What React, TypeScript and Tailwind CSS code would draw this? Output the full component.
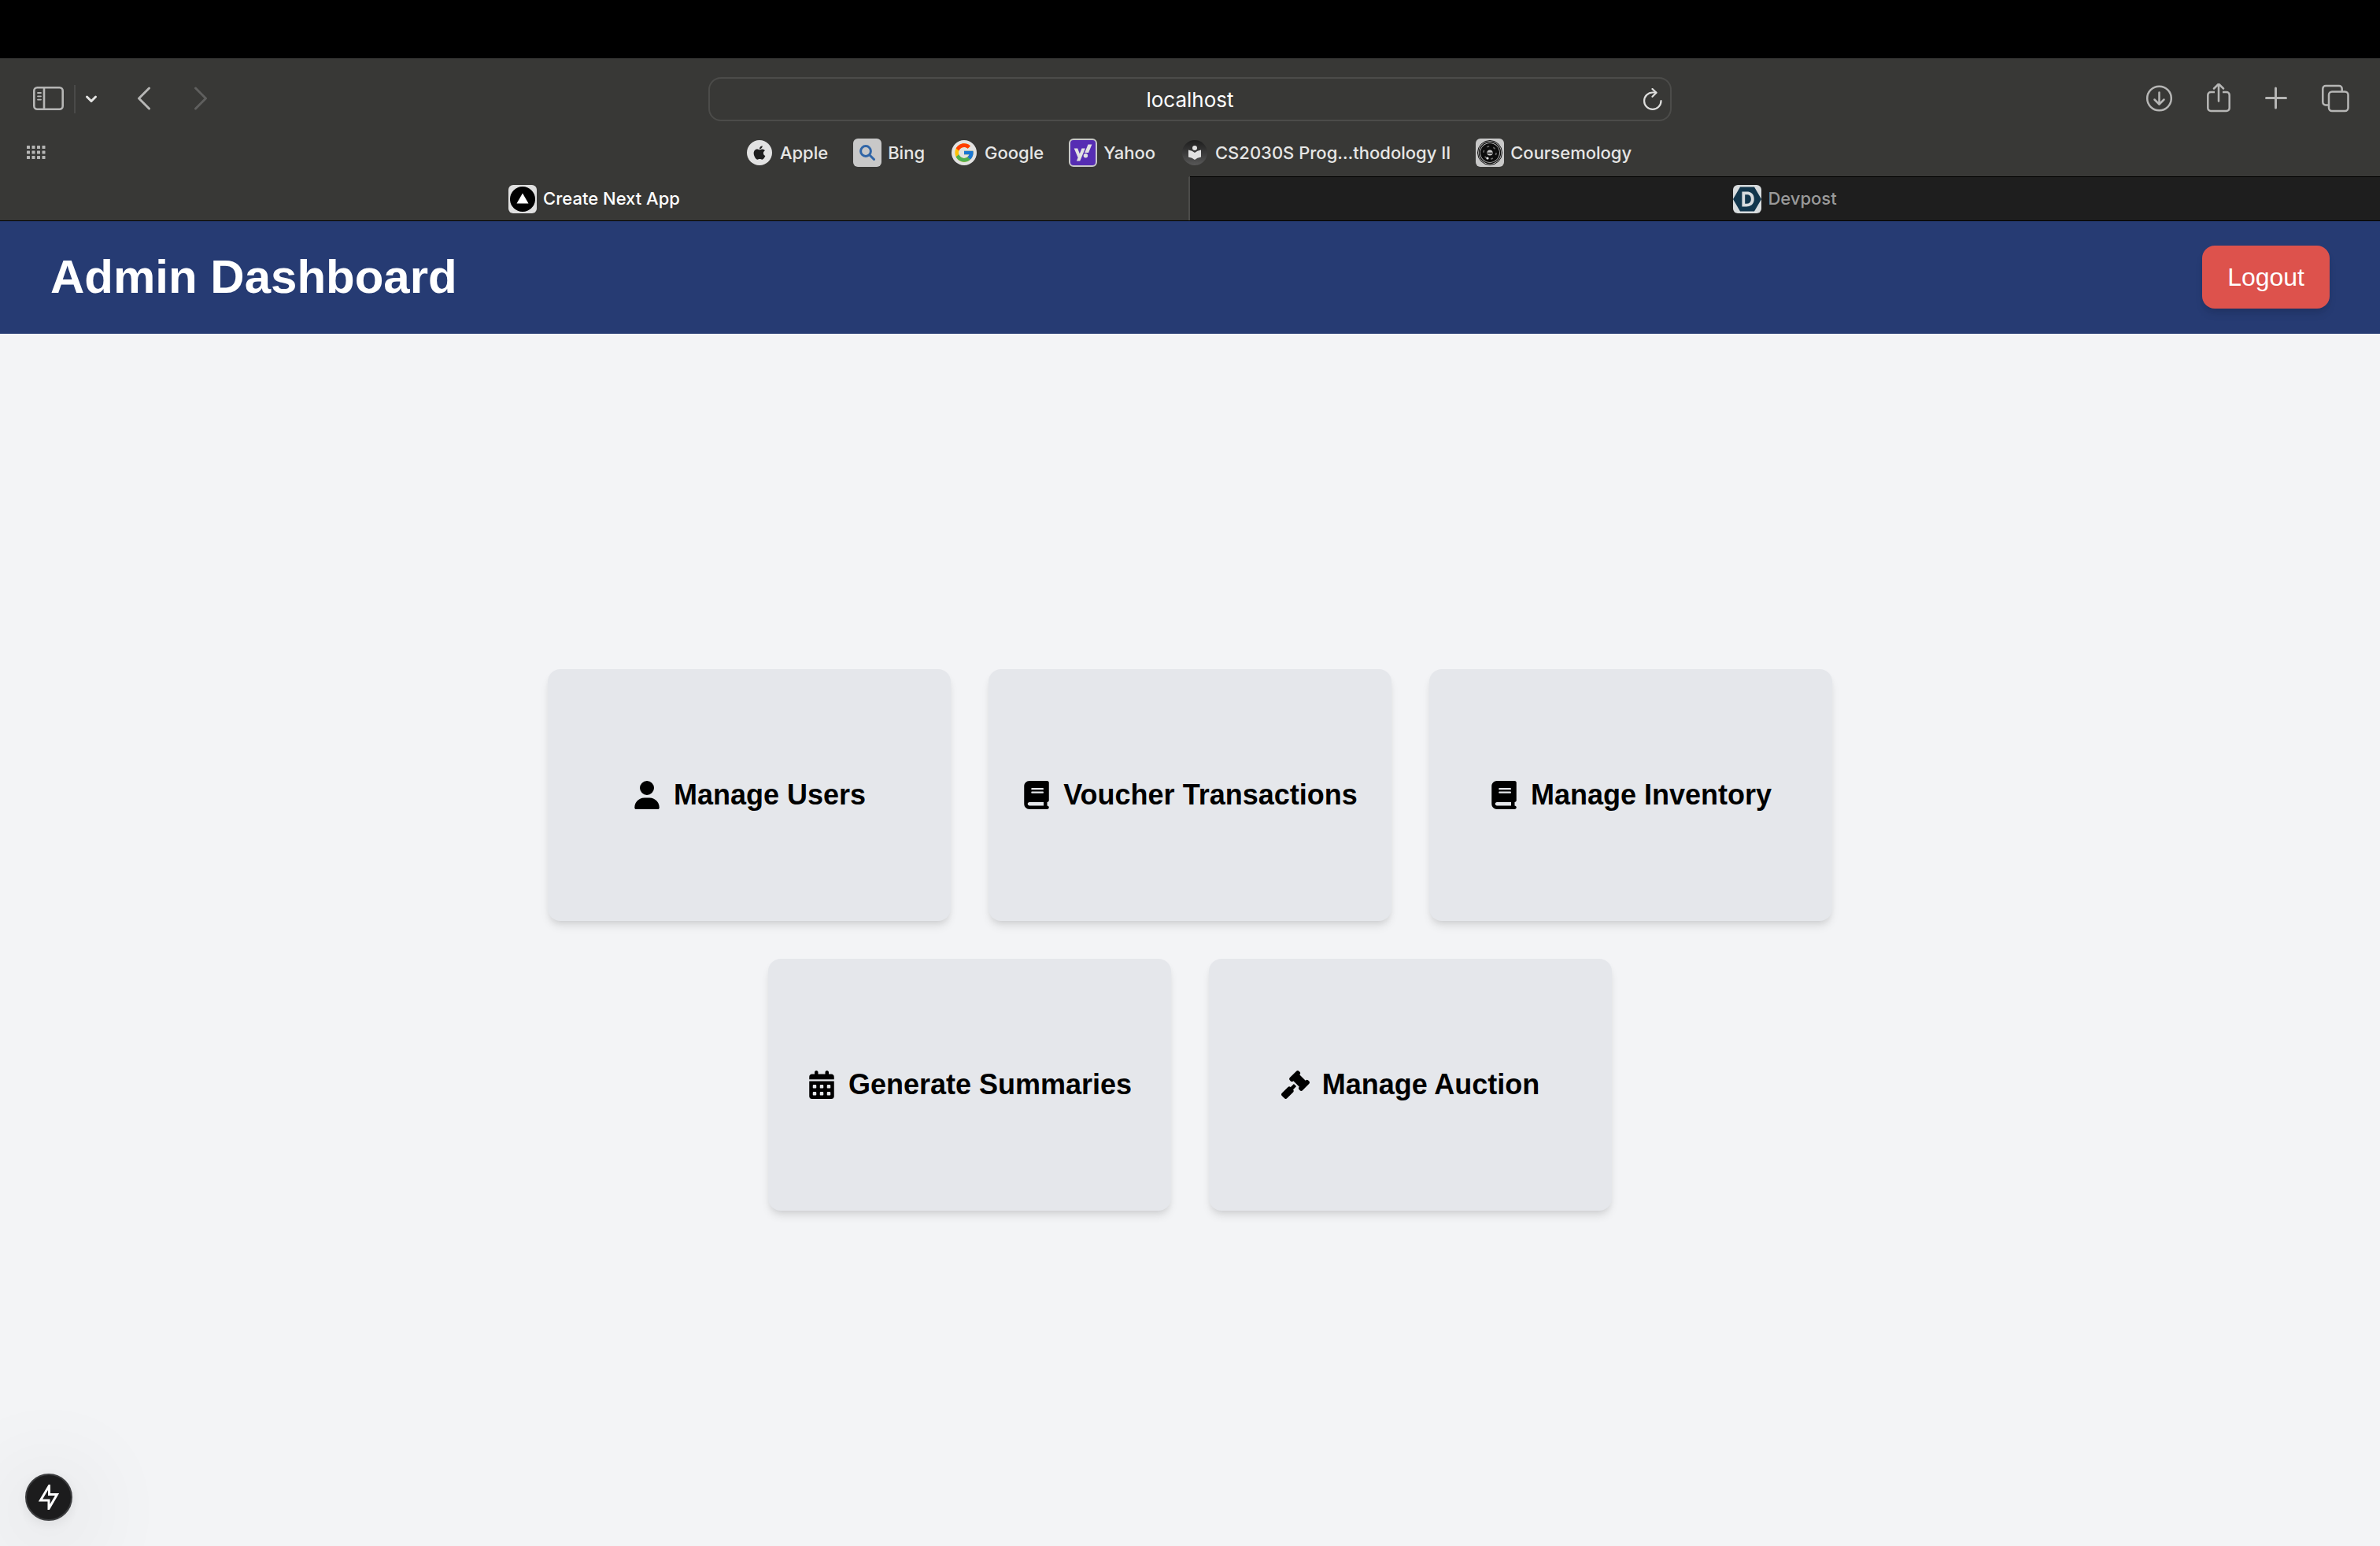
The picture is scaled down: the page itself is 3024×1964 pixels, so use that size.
import { ReactNode } from "react";
import {
  FaApple,
  FaBook,
  FaCalendarDays,
  FaGavel,
  FaUser,
  FaYahoo,
} from "react-icons/fa6";
import { FcGoogle } from "react-icons/fc";
import { SiDevpost } from "react-icons/si";

interface Bookmark {
  name: string;
  icon: ReactNode;
}

const bookmarks: Bookmark[] = [
  {
    name: "Apple",
    icon: (
      <span className="w-8 h-8 rounded-full bg-[#e2e2e2] flex items-center justify-center">
        <FaApple className="w-5 h-5 text-[#1e1e1e]" />
      </span>
    ),
  },
  {
    name: "Bing",
    icon: (
      <span className="w-9 h-9 rounded-md bg-[#c8c8c8] flex items-center justify-center">
        <svg
          className="w-5 h-5"
          viewBox="0 0 20 20"
          fill="none"
          stroke="#2f65a7"
          strokeWidth={3}
          strokeLinecap="round"
        >
          <circle cx="8" cy="8" r="6.4" />
          <path d="M13 13l5.5 5.5" />
        </svg>
      </span>
    ),
  },
  {
    name: "Google",
    icon: (
      <span className="w-8 h-8 rounded-full bg-[#e2e2e2] flex items-center justify-center">
        <FcGoogle className="w-7 h-7" />
      </span>
    ),
  },
  {
    name: "Yahoo",
    icon: (
      <span className="w-9 h-9 rounded-md border-2 border-[#c8c8c8] bg-[#562db3] flex items-center justify-center">
        <FaYahoo className="w-6 h-6 text-[#e2e2e2]" />
      </span>
    ),
  },
  {
    name: "CS2030S Prog…thodology II",
    icon: (
      <span className="w-8 h-8 rounded-full bg-gradient-to-b from-[#1e1e1e] to-[#585858] flex items-center justify-center">
        <svg className="w-5 h-5" viewBox="0 0 20 20" fill="#e2e2e2">
          <circle cx="10" cy="4" r="3" />
          <path d="M2 6.5Q7 7 10 10Q13 7 18 6.5V15.5Q13 16 10 19Q7 16 2 15.5Z" />
        </svg>
      </span>
    ),
  },
  {
    name: "Coursemology",
    icon: (
      <svg className="w-9 h-9" viewBox="0 0 36 36" fill="none">
        <rect width="36" height="36" rx="6" fill="#c8c8c8" />
        <circle cx="18" cy="18" r="15.5" stroke="#111" />
        <circle cx="18" cy="18" r="13.5" stroke="#111" strokeWidth={1.4} />
        <circle cx="18" cy="18" r="12" fill="#0c0c0c" />
        <circle
          cx="18"
          cy="18"
          r="8"
          stroke="#6a6a6a"
          strokeWidth={1.6}
          strokeDasharray="3 5.4"
        />
        <circle cx="18" cy="18" r="3.6" fill="#c8c8c8" />
        <path d="M15 18.5h6" stroke="#111" strokeWidth={1.5} />
        <circle cx="15" cy="25" r="1.6" fill="#e8e8e8" />
      </svg>
    ),
  },
];

const cardRows = [
  [
    { label: "Manage Users", Icon: FaUser },
    { label: "Voucher Transactions", Icon: FaBook },
    { label: "Manage Inventory", Icon: FaBook },
  ],
  [
    { label: "Generate Summaries", Icon: FaCalendarDays },
    { label: "Manage Auction", Icon: FaGavel },
  ],
];

function Toolbar() {
  return (
    <div className="grid grid-cols-[1fr_minmax(0,1224px)_1fr] items-center">
      <div className="flex items-center pl-[42px] text-[#b6b6b5]">
        <button type="button" aria-label="Toggle sidebar">
          <svg
            className="w-10 h-8"
            viewBox="0 0 40 32"
            fill="none"
            stroke="currentColor"
            strokeWidth={2.6}
            strokeLinecap="round"
          >
            <rect x="1.3" y="1.3" width="36.4" height="27.4" rx="4" />
            <path d="M14 1.3v27.4" />
            <path d="M6 8h4M6 12.3h4M6 16.6h4" strokeWidth={1.8} />
          </svg>
        </button>
        <div className="ml-3 w-0.5 h-9 bg-[#4a4a49]"></div>
        <button
          type="button"
          aria-label="Tab groups"
          className="ml-3 text-[#e4e4e3]"
        >
          <svg
            className="w-4 h-4"
            viewBox="0 0 16 16"
            fill="none"
            stroke="currentColor"
            strokeWidth={3}
            strokeLinecap="round"
            strokeLinejoin="round"
          >
            <path d="M2.5 5l5.5 5.5L13.5 5" />
          </svg>
        </button>
        <button type="button" aria-label="Back" className="ml-[50px]">
          <svg
            className="w-[18px] h-8"
            viewBox="0 0 18 32"
            fill="none"
            stroke="currentColor"
            strokeWidth={3}
            strokeLinecap="round"
            strokeLinejoin="round"
          >
            <path d="M15.5 2L2.5 15l13 13" />
          </svg>
        </button>
        <button
          type="button"
          aria-label="Forward"
          className="ml-[54px] text-[#5f5f5e]"
        >
          <svg
            className="w-[18px] h-8"
            viewBox="0 0 18 32"
            fill="none"
            stroke="currentColor"
            strokeWidth={3}
            strokeLinecap="round"
            strokeLinejoin="round"
          >
            <path d="M2.5 2l13 13-13 13" />
          </svg>
        </button>
      </div>

      {/* Address bar */}
      <div className="h-14 flex items-center px-2.5 border-2 border-[#4c4c4a] rounded-2xl">
        <input
          type="text"
          aria-label="Address"
          defaultValue="localhost"
          className="flex-1 min-w-0 pl-6 bg-transparent text-center text-[26px] text-white focus:outline-none"
        />
        <button type="button" aria-label="Reload" className="text-[#dededd]">
          <svg
            className="w-6 h-7"
            viewBox="0 0 24 28"
            fill="none"
            stroke="currentColor"
            strokeWidth={2.2}
            strokeLinecap="round"
            strokeLinejoin="round"
          >
            <path d="M22.5 16.2A10.7 10.7 0 1 1 11.8 5.5h4.4" />
            <path d="M11.5 1l5 4.8-5 5" />
          </svg>
        </button>
      </div>

      <div className="flex items-center justify-end gap-11 pr-[38px] text-[#b6b6b5]">
        <button type="button" aria-label="Downloads">
          <svg
            className="w-[34px] h-10"
            viewBox="0 0 34 40"
            fill="none"
            stroke="currentColor"
            strokeWidth={2.5}
            strokeLinecap="round"
            strokeLinejoin="round"
          >
            <circle cx="17.5" cy="19" r="15.3" />
            <path d="M17.5 11.5V26M11.5 20.5l6 6 6-6" />
          </svg>
        </button>
        <button type="button" aria-label="Share">
          <svg
            className="w-[30px] h-10"
            viewBox="0 0 30 40"
            fill="none"
            stroke="currentColor"
            strokeWidth={2.5}
            strokeLinecap="round"
            strokeLinejoin="round"
          >
            <path
              d="M10 11H5a3.7 3.7 0 0 0-3.7 3.7v16.6A3.7 3.7 0 0 0 5 35h20a3.7 3.7 0 0 0 3.7-3.7V14.7A3.7 3.7 0 0 0 25 11h-5"
              strokeLinecap="butt"
            />
            <path d="M15 22.5V1M9 6.5l6-6 6 6" />
          </svg>
        </button>
        <button type="button" aria-label="New tab">
          <svg
            className="w-7 h-10"
            viewBox="0 0 28 40"
            fill="none"
            stroke="currentColor"
            strokeWidth={3}
            strokeLinecap="round"
          >
            <path d="M13.5 6v25M1.5 18.5h25" />
          </svg>
        </button>
        <button type="button" aria-label="Show all tabs">
          <svg
            className="w-9 h-10"
            viewBox="0 0 36 40"
            fill="none"
            stroke="currentColor"
            strokeWidth={2.5}
          >
            <rect x="9" y="10.5" width="24.5" height="24.5" rx="4" />
            <path d="M9 27.5H5A3.7 3.7 0 0 1 1.3 23.8V6.7A3.7 3.7 0 0 1 5 3h17a3.7 3.7 0 0 1 3.7 3.7v3.8" />
          </svg>
        </button>
      </div>
    </div>
  );
}

function BookmarksBar() {
  return (
    <div className="mt-[22px] grid grid-cols-[1fr_auto_1fr] items-center">
      <div className="flex pl-[34px]">
        <button type="button" aria-label="All bookmarks">
          <svg className="w-6 h-[18px]" viewBox="0 0 24 18" fill="#b6b6b5">
            {[0, 6.5, 13].map((y) =>
              [0, 6.5, 13, 19.5].map((x) => (
                <rect key={`${x}-${y}`} x={x} y={y} width="4" height="4" rx="0.5" />
              ))
            )}
          </svg>
        </button>
      </div>
      <nav className="flex items-center gap-8 pr-1">
        {bookmarks.map((bookmark) => (
          <a
            key={bookmark.name}
            href="#"
            className="flex items-center gap-2 text-[22px] leading-9 font-medium text-[#e6e6e5]"
          >
            <span className="w-9 h-9 flex items-center justify-center">
              {bookmark.icon}
            </span>
            {bookmark.name}
          </a>
        ))}
      </nav>
    </div>
  );
}

function BrowserTabs() {
  return (
    <div role="tablist" className="h-14 grid grid-cols-2 text-[22px] font-medium">
      <button
        type="button"
        role="tab"
        aria-selected="true"
        className="flex items-center justify-center gap-2 border-t border-t-transparent border-r-2 border-r-[#4c4c4a] text-white"
      >
        <svg className="w-9 h-9" viewBox="0 0 36 36">
          <rect width="36" height="36" rx="6" fill="#e0e0e0" />
          <circle cx="18" cy="18" r="16" fill="#000" />
          <path d="M18 10.5L25.5 23.5h-15z" fill="#fff" />
        </svg>
        Create Next App
      </button>
      <button
        type="button"
        role="tab"
        aria-selected="false"
        className="flex items-center justify-center gap-2 border-t border-black bg-[#1e1e1e] text-[#9a9a9a]"
      >
        <span className="w-9 h-9 rounded-md bg-[#d8dcde] flex items-center justify-center">
          <SiDevpost className="w-9 h-9 text-[#12364c]" />
        </span>
        Devpost
      </button>
    </div>
  );
}

export default function App() {
  return (
    <div className="min-h-screen flex flex-col bg-gray-100 font-['Liberation_Sans',Arial,sans-serif]">
      {/* Browser chrome */}
      <div className="border-t-[74px] border-black bg-[#383836] pt-6 font-['Inter',sans-serif]">
        <Toolbar />
        <BookmarksBar />
        <div className="mt-3">
          <BrowserTabs />
        </div>
      </div>

      {/* Header */}
      <header className="flex items-center justify-between px-16 py-8 bg-[#263b73] shadow-[inset_0_1px_0_#000]">
        <h1 className="text-6xl font-bold text-white">Admin Dashboard</h1>
        <button
          type="button"
          className="px-8 py-4 rounded-2xl bg-[#dd524c] text-[32px] leading-[48px] text-white shadow-[0_8px_12px_-2px_rgba(0,0,0,0.1),0_4px_8px_-4px_rgba(0,0,0,0.1)] cursor-pointer"
        >
          Logout
        </button>
      </header>

      {/* Dashboard cards */}
      <main className="flex-1 flex flex-col items-center justify-center gap-12">
        {cardRows.map((row, index) => (
          <div key={index} className="flex justify-center gap-12">
            {row.map(({ label, Icon }) => (
              <button
                key={label}
                type="button"
                className="w-[512px] h-80 flex items-center justify-center gap-4 rounded-2xl bg-gray-200 text-4xl font-bold text-black shadow-[0_8px_12px_-2px_rgba(0,0,0,0.1),0_4px_8px_-4px_rgba(0,0,0,0.1)] cursor-pointer"
              >
                <Icon />
                {label}
              </button>
            ))}
          </div>
        ))}
      </main>

      {/* Dev indicator */}
      <button
        type="button"
        aria-label="Static route"
        className="fixed bottom-8 left-8 w-[60px] h-[60px] rounded-full bg-[#1c1c1d] border-2 border-[#3c3d3f] flex items-center justify-center shadow-[0_4px_16px_rgba(0,0,0,0.08),0_16px_120px_16px_rgba(0,0,0,0.1)]"
      >
        <svg
          className="w-7 h-8"
          viewBox="0 0 28 32"
          fill="none"
          stroke="#fff"
          strokeWidth={3}
        >
          <path d="M14.5 1.5L3.5 20H14V30.5L24.5 12.5H14.5z" />
        </svg>
      </button>
    </div>
  );
}
